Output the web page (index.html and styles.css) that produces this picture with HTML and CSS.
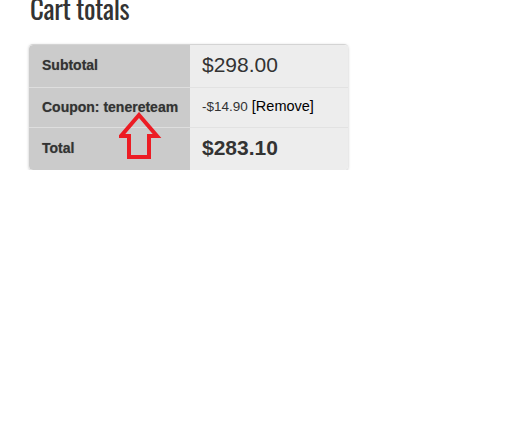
FILE: index.html
```html
<!DOCTYPE html>
<html lang="en">
<head>
  <meta charset="UTF-8">
  <title>Cart totals</title>
  <link rel="stylesheet" href="styles.css">
</head>
<body>
  <div class="cart-totals">
    <h2>Cart totals</h2>

    <div class="totals-wrap">
      <table class="totals-table">
        <tr>
          <th>Subtotal</th>
          <td class="amount">$298.00</td>
        </tr>
        <tr class="coupon">
          <th>Coupon: tenereteam</th>
          <td><span class="discount">-$14.90</span> <a href="#">[Remove]</a></td>
        </tr>
        <tr class="order-total">
          <th>Total</th>
          <td class="amount"><strong>$283.10</strong></td>
        </tr>
      </table>

      <!-- red arrow pointing at the coupon code -->
      <svg class="arrow" width="44" height="50" viewBox="0 0 44 50">
        <polygon points="20,3 38,24 30,24 30,45 10,45 10,24 2,24" fill="none" stroke="#ec1c24" stroke-width="4" stroke-linejoin="miter"/>
      </svg>
    </div>
  </div>
</body>
</html>
```

FILE: styles.css
```css
html, body {
  margin: 0;
  padding: 0;
  background-color: white;
  font-family: "Liberation Sans", Arial, sans-serif;
}

.cart-totals {
  padding-left: 29px;
  width: 319px;
}

.cart-totals h2 {
  font-family: "Oswald", "Liberation Sans Narrow", "DejaVu Sans Condensed", sans-serif;
  font-weight: 400;
  font-size: 27px;
  line-height: 30px;
  color: #333;
  margin: -7px 0 0 1px;
  letter-spacing: -0.4px;
}

.totals-wrap {
  position: relative;
  margin-top: 21px;
}

.totals-table {
  width: 100%;
  border-collapse: separate;
  border-spacing: 0;
  border-top: 1px solid #d4d4d4;
  border-radius: 4px;
  box-shadow: 0 1px 3px rgba(0, 0, 0, 0.25);
  overflow: hidden;
}

.totals-table th,
.totals-table td {
  line-height: 20px;
  height: 40px;
  padding-top: 0;
  padding-bottom: 2px;
}

.totals-table th {
  width: 161px;
  box-sizing: border-box;
  background-color: #cbcbcb;
  text-align: left;
  font-size: 14px;
  font-weight: 700;
  color: #333;
  padding-left: 13px;
  text-shadow: 0 0 1px rgba(0, 0, 0, 0.35);
}

.totals-table td {
  background-color: #ededed;
  color: #333;
  padding-left: 12px;
  font-size: 14.5px;
}

.totals-table tr + tr th {
  border-top: 1px solid #dedede;
}

.totals-table tr + tr td {
  border-top: 1px solid #e2e2e2;
}

.totals-table .coupon th,
.totals-table .coupon td {
  height: 37px;
}

.totals-table .order-total th,
.totals-table .order-total td {
  height: 40px;
}

.totals-table tr:first-child th {
  border-top-left-radius: 4px;
}

.totals-table tr:last-child th {
  border-bottom-left-radius: 4px;
}

.totals-table .amount {
  font-size: 21px;
}

.discount {
  font-size: 13.5px;
}

.totals-table a {
  color: #000;
  text-decoration: none;
}

.arrow {
  position: absolute;
  left: 90px;
  top: 68px;
}
```
